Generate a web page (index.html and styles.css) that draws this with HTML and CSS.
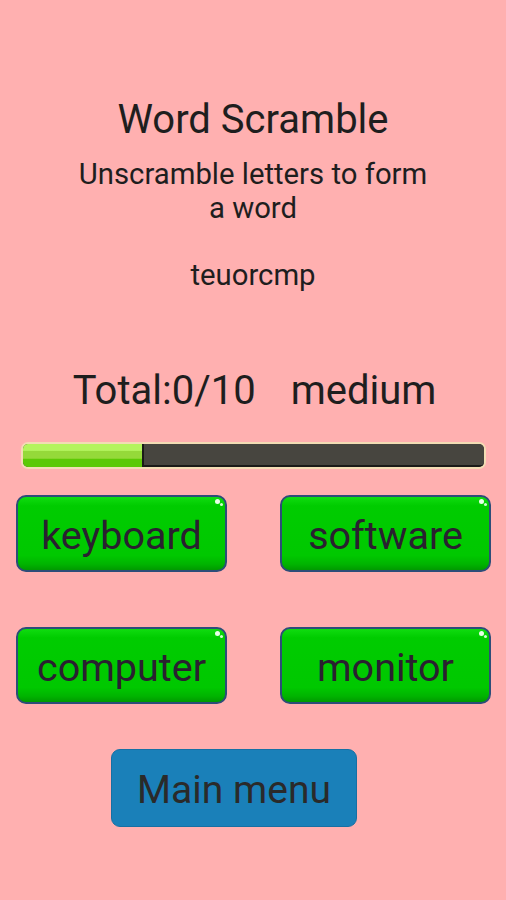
FILE: index.html
```html
<!DOCTYPE html>
<html>
<head>
<meta charset="utf-8">
<link rel="stylesheet" href="styles.css">
</head>
<body>
<div class="screen">
  <h1 class="title">Word Scramble</h1>
  <p class="subtitle">Unscramble letters to form<br>a word</p>
  <p class="scrambled">teuorcmp</p>
  <p class="score"><span>Total:0/10</span><span>medium</span></p>
  <div class="progress">
    <div class="progress-fill" style="width: 119px"></div>
    <div class="progress-rest"></div>
  </div>
  <div class="choices">
    <button class="choice">keyboard</button>
    <button class="choice">software</button>
    <button class="choice">computer</button>
    <button class="choice">monitor</button>
  </div>
  <button class="menu">Main menu</button>
</div>
</body>
</html>
```
FILE: styles.css
```css
html, body {
  margin: 0;
  padding: 0;
  background: #ffb0b0;
}
body {
  font-family: Roboto, "Noto Sans", sans-serif;
  color: #222;
}
.screen {
  width: 506px;
  height: 900px;
  display: flex;
  flex-direction: column;
  align-items: center;
  box-sizing: border-box;
  padding-top: 96px;
}
.title {
  margin: 0;
  font-size: 40px;
  font-weight: 400;
  line-height: 47px;
  color: #1e1e1e;
}
.subtitle {
  margin: 14px 0 0;
  font-size: 29.3px;
  line-height: 34px;
  text-align: center;
  color: #1e1e1e;
}
.scrambled {
  margin: 33px 0 0;
  font-size: 29.3px;
  line-height: 34px;
  color: #1e1e1e;
}
.score {
  margin: 74px 0 0 3px;
  font-size: 40px;
  line-height: 49px;
  display: flex;
  gap: 35px;
  color: #1e1e1e;
}
.progress {
  margin-top: 27px;
  width: 465px;
  height: 27px;
  box-sizing: border-box;
  border: 2px solid #f3dcb4;
  border-radius: 7px;
  background: #46443e;
  display: flex;
  overflow: hidden;
  align-self: flex-start;
  margin-left: 21px;
}
.progress-fill {
  height: 100%;
  background: linear-gradient(#b4f45e 0%, #b4f45e 28%, #95d93a 30%, #95d93a 62%, #5cc905 66%, #5cc905 100%);
  border-radius: 4px 0 0 4px;
}
.progress-rest {
  flex: 1;
  height: 100%;
  box-sizing: border-box;
  border-left: 2px solid #1a1a18;
  border-bottom: 2px solid #1a1a18;
  border-radius: 0 4px 4px 0;
  background: #47453f;
}
.choices {
  margin-top: 26px;
  width: 475px;
  align-self: flex-start;
  margin-left: 16px;
  display: grid;
  grid-template-columns: 211px 211px;
  column-gap: 53px;
  row-gap: 55px;
}
.choice {
  position: relative;
  height: 77px;
  box-sizing: border-box;
  border: 2px solid #2d4d78;
  border-radius: 10px;
  background: linear-gradient(#10dc10 0%, #00cc00 12%, #00c800 80%, #00b400 92%, #009a00 100%);
  font-family: Roboto, "Noto Sans", sans-serif;
  font-size: 39.5px;
  color: #2a2030;
  padding: 4px 0 0;
  cursor: pointer;
}
.choice::after {
  content: "";
  position: absolute;
  top: 2px;
  right: 5px;
  width: 5px;
  height: 5px;
  border-radius: 50%;
  background: #e8ffe8;
  box-shadow: 4px 3px 0 -1px #d0ffd0;
}
.menu {
  margin-top: 45px;
  align-self: flex-start;
  margin-left: 111px;
  width: 246px;
  height: 78px;
  box-sizing: border-box;
  border: 1px solid #1670a4;
  border-radius: 9px;
  background: #1a80b9;
  font-family: Roboto, "Noto Sans", sans-serif;
  font-size: 39px;
  color: #2a2a2a;
  padding: 3px 0 0;
}
```
